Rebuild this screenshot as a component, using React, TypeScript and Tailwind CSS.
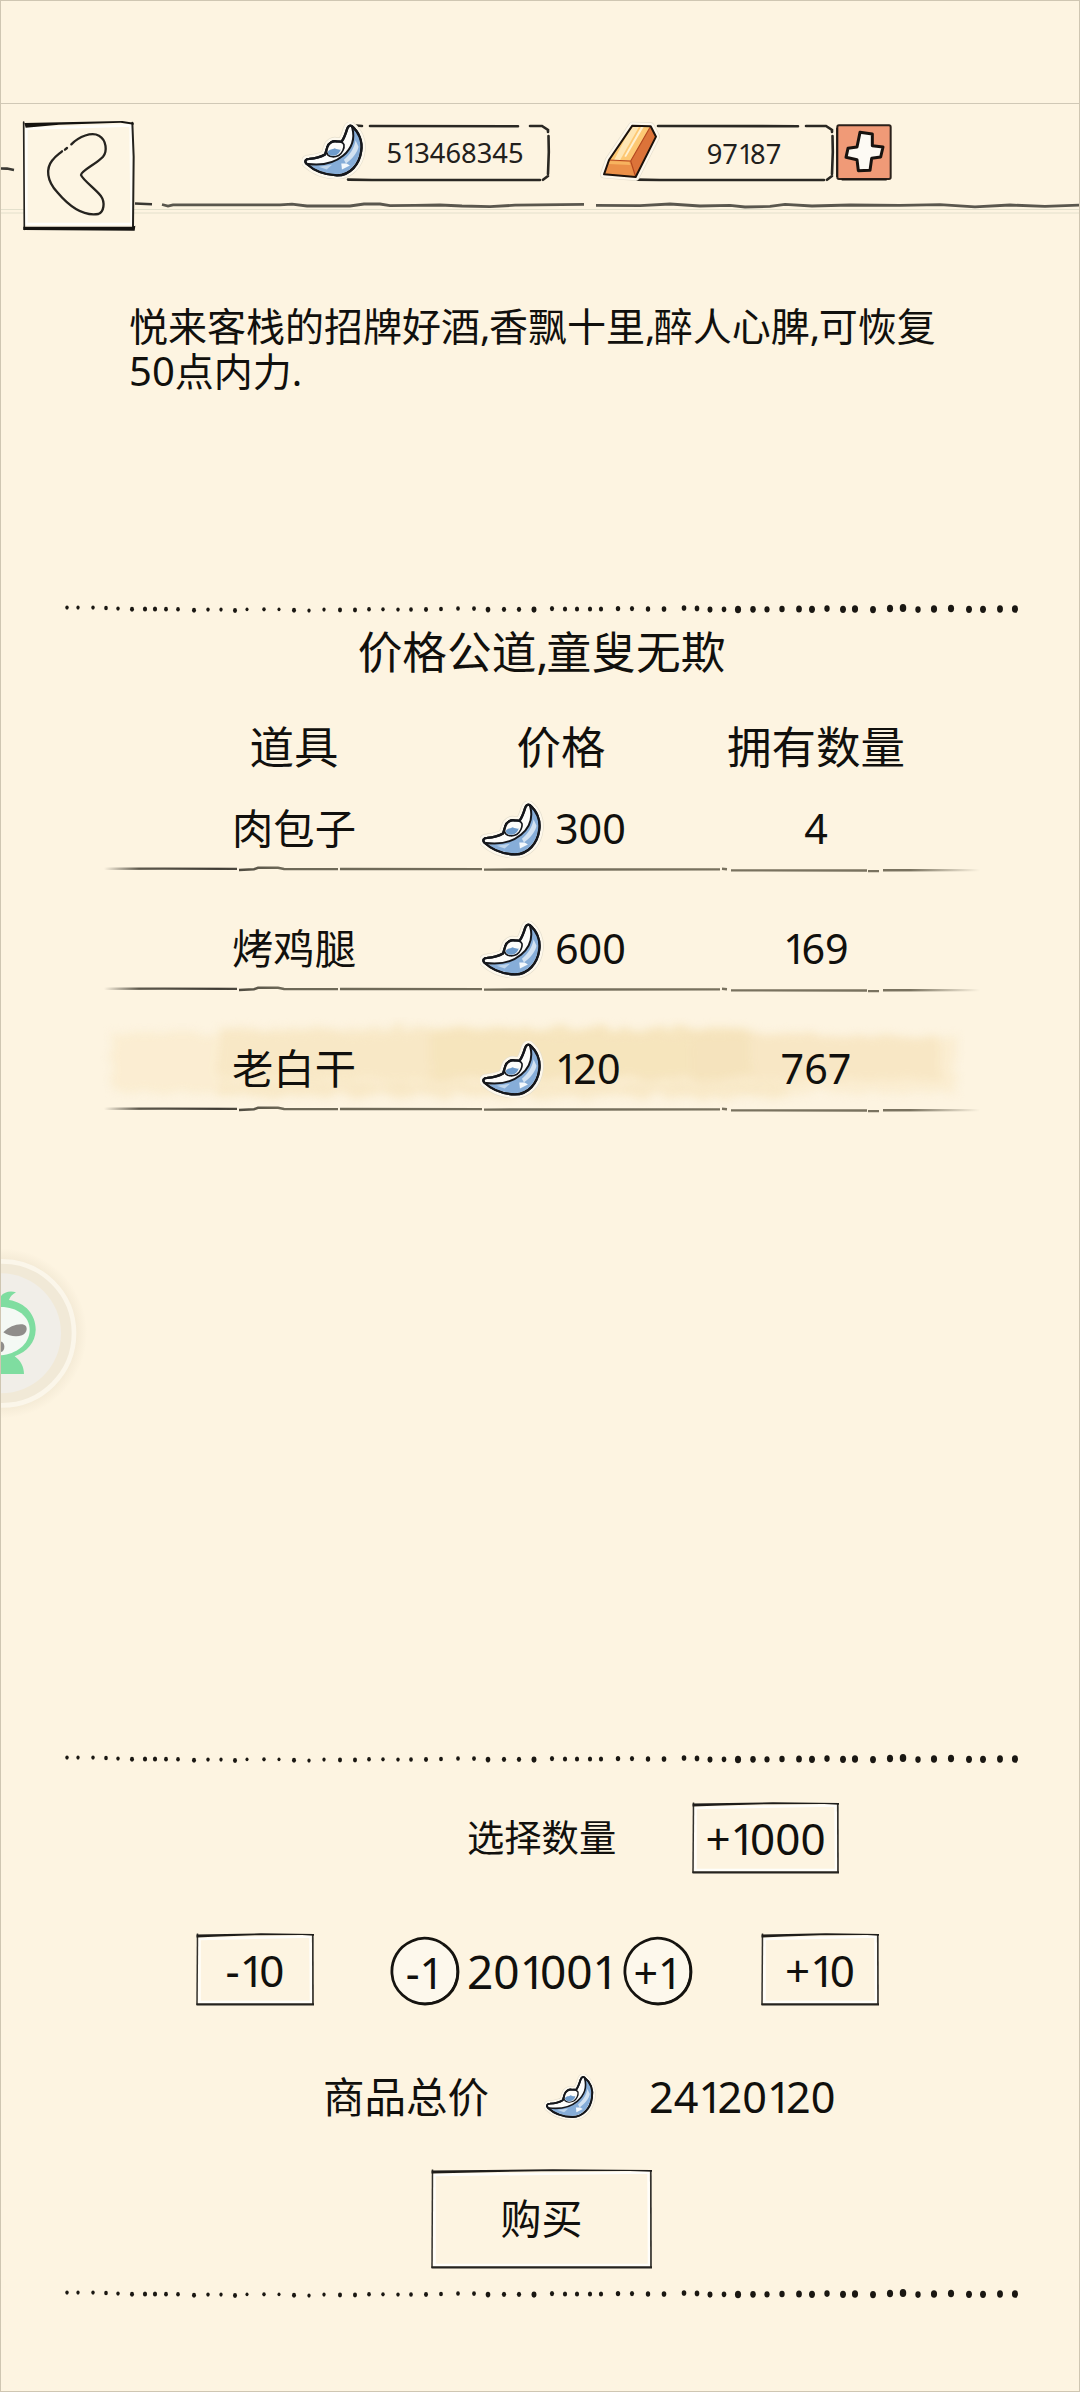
import { Fragment } from "react";
import type { ReactNode } from "react";
import clsx from "clsx";

type Item = {
  name: string;
  price: string;
  owned: string;
  selected?: boolean;
};

const items: Item[] = [
  { name: "肉包子", price: "300", owned: "4" },
  { name: "烤鸡腿", price: "600", owned: "169" },
  { name: "老白干", price: "120", owned: "767", selected: true },
];

// x, y, radius
const dots = [
  [67, 8, 1.6], [78, 8, 1.5], [93, 8, 1.6], [106, 8.5, 1.7], [118, 9, 1.6], [132, 9.7, 1.9], [145, 9.4, 2], [155, 9.4, 2],
  [166, 9.6, 1.8], [178, 9.7, 1.7], [194, 10.7, 1.9], [208, 10, 1.6], [221, 10, 1.5], [235, 11, 1.9], [247, 9.7, 1.4],
  [264, 9.7, 1.6], [279, 9.7, 1.4], [294, 10.7, 1.9], [309, 11, 1.5], [324, 10, 1.5], [340, 10.4, 1.9], [355, 10.4, 1.9],
  [369, 9.7, 1.7], [383, 9.7, 1.6], [398, 10, 1.6], [411, 10, 1.7], [426, 10, 1.9], [441, 9.4, 1.8], [458, 9, 1.7],
  [474, 9, 1.8], [488, 10, 2.2], [504, 9.7, 2], [519, 9.7, 2], [534, 10, 2.4], [552, 9, 2], [565, 9.4, 2], [577, 9.4, 2],
  [590, 9.4, 2], [601, 9.4, 2], [618, 9, 2.1], [632, 9, 2], [648, 9.4, 2.1], [664, 9.4, 2.2], [684, 8.4, 2.2],
  [697, 8.8, 2.2], [710, 10, 2.4], [724, 9.7, 2.2], [738, 10, 3], [753, 9.7, 2.7], [767, 9.7, 2.5], [782, 9.4, 2.6],
  [799, 9.4, 2.8], [812, 9.7, 2.9], [827, 9, 2.6], [843, 9.7, 2.9], [855, 9.4, 3], [873, 10, 2.9], [890, 9, 3],
  [903, 8.4, 3.2], [918, 10, 2.6], [934, 9.4, 3], [951, 9, 3], [969, 9.7, 2.9], [983, 9.7, 2.9], [1000, 9.4, 2.9],
  [1015, 9.4, 3],
];

function DottedLine({ className }: { className?: string }) {
  return (
    <svg className={clsx("block h-5 w-[1080px] shrink-0", className)} viewBox="0 0 1080 20" fill="#1a1712">
      {dots.map(([x, y, r]) => (
        <ellipse key={x} cx={x} cy={y + 0.6} rx={r * 0.95 + 0.2} ry={r * 1.15 + 0.3} />
      ))}
    </svg>
  );
}

// The digit "1" sits tighter against its right neighbour than the others
function Num({ value }: { value: string }) {
  const parts = value.split("1");
  return (
    <span className="whitespace-nowrap">
      {parts.map((p, i) => (
        <Fragment key={i}>
          {p}
          {i < parts.length - 1 && <span className="tracking-[-0.13em]">1</span>}
        </Fragment>
      ))}
    </span>
  );
}

function Comma() {
  return <span className="tracking-[-0.04em]">,</span>;
}

function Ingot({ className }: { className?: string }) {
  const body =
    "M179 37C200 54 213 82 208 113C203 152 175 186 135 186C98 185 66 172 43 151C36 143 41 136 51 136C70 135 86 131 99 123L106 101C110 88 123 80 135 84L149 84C157 74 162 58 166 45C169 37 174 34 179 37Z";
  return (
    <svg className={clsx("block shrink-0", className)} viewBox="30 25 192 172" strokeLinejoin="round" strokeLinecap="round">
      <path d={body} fill="none" stroke="#e6dfcd" strokeWidth="26" />
      <path d={body} fill="none" stroke="#fdf8ec" strokeWidth="22" />
      <path d={body} fill="#fdfdfb" stroke="#15171c" strokeWidth="7" />
      <path
        d="M181 42C203 60 210 88 204 116C197 152 170 182 135 182C105 182 76 172 52 156C90 156 128 148 153 127C178 106 190 76 181 42Z"
        fill="#86add8"
      />
      <path d="M191 80C188 104 172 126 156 139L162 150C180 138 197 118 200 100Z" fill="#d3e2f1" />
      <path d="M148 150L164 150L174 156L150 168Z" fill="#f3f8fc" />
      <path d="M80 160L120 154L104 168Z" fill="#c0d6ec" />
      <path
        d="M104 108C106 94 114 87 124 85C138 82 151 84 156 93C158 104 151 119 140 126C128 132 114 131 108 125C103 120 102 115 104 108Z"
        fill="#fdfdfb"
        stroke="#15171c"
        strokeWidth="5"
      />
      <path d="M107 115C113 106 121 109 128 104C137 108 143 109 146 108C144 118 136 126 124 127C114 128 107 123 107 115Z" fill="#6f9ccc" />
      <path d="M181 42C190 76 178 106 153 127C128 148 90 157 48 152" fill="none" stroke="#15171c" strokeWidth="6" />
      <path d={body} fill="none" stroke="#15171c" strokeWidth="7" />
    </svg>
  );
}

function GoldBar() {
  return (
    <svg className="block h-[60px] w-[60px] shrink-0" viewBox="58 58 180 180" strokeLinejoin="round">
      <path d="M155 72L210 74L226 105L165 226L70 218L85 175Z" fill="#fdf8ec" stroke="#e6dfcd" strokeWidth="24" />
      <path d="M155 72L210 74L226 105L165 226L70 218L85 175Z" fill="#fdf8ec" stroke="#fdf8ec" strokeWidth="20" />
      <path d="M155 72L210 74L150 178L85 175Z" fill="#fdc873" />
      <path d="M141 96L157 74L176 74L118 176L100 176Z" fill="#ffe6b3" />
      <path d="M181 76L189 76L136 166L131 164Z" fill="#fff0cf" />
      <path d="M210 74L226 105L165 226L150 178Z" fill="#dc7339" />
      <path d="M85 175L150 178L165 226L70 218Z" fill="#eb9048" />
      <path d="M88 178L146 180L149 190L84 187Z" fill="#f7b35f" />
      <path d="M85 175L150 178L210 74M150 178L165 226" fill="none" stroke="#b4471d" strokeWidth="3.5" />
      <path d="M155 72L210 74L226 105L165 226L70 218L85 175Z" fill="none" stroke="#1c120b" strokeWidth="6" />
    </svg>
  );
}

function AddButton() {
  return (
    <button className="block shrink-0">
      <svg className="block h-[58px] w-[58px]" viewBox="770 70 174 174" strokeLinejoin="round">
        <rect x="777" y="77" width="160" height="161" rx="5" fill="#f09a77" stroke="#2b211b" strokeWidth="6" />
        <path d="M776 84V232M790 240H925" stroke="#1d1713" strokeWidth="5" />
        <path
          d="M845 98L882 103V138L914 142L907 172L880 176L875 212L840 213L836 180L803 173L809 146L836 142Z"
          fill="#fdfaf4"
          stroke="#17120f"
          strokeWidth="9"
        />
      </svg>
    </button>
  );
}

function SketchBox({ w, h, className, children }: { w: number; h: number; className?: string; children: ReactNode }) {
  return (
    <button className={clsx("relative flex shrink-0 items-center justify-center", className)}>
      <svg className="absolute inset-0 h-full w-full" viewBox={`0 0 ${w} ${h}`}>
        <path d={`M3.5 6L${w - 3.5} 3.5L${w - 3} ${h - 4}H3.5Z`} fill="none" stroke="#fffefa" strokeWidth="2.5" />
        <path d={`M1.5 0.5L1 ${h - 1}`} stroke="#34322d" strokeWidth="1.5" />
        <path d={`M${w - 1.2} 2L${w - 1} ${h - 1}`} stroke="#34322d" strokeWidth="1.7" />
        <path d={`M0.5 1.6L${w * 0.55} 0.3L${w} 1L${w} 2.8L${w * 0.9} 2L${w * 0.5} 2.2L${w * 0.2} 3.5L0.5 4.4Z`} fill="#1f1d1a" />
        <path d={`M0.5 ${h - 2.8}H${w}V${h - 0.4}H0.5Z`} fill="#25231f" />
      </svg>
      <span className="relative">{children}</span>
    </button>
  );
}

function RoundButton({ children }: { children: ReactNode }) {
  return (
    <button className="relative flex h-[70px] w-[70px] shrink-0 items-center justify-center text-[43px]">
      <svg className="absolute inset-0" viewBox="0 0 70 70">
        <circle cx="35" cy="35" r="33" fill="#fdf8ec" />
        <path d="M53 8C45 2 32 0 22 5C8 11 1 24 2 38C3 54 18 68 35 68C54 68 68 54 68 36C68 24 62 14 53 8" fill="none" stroke="#15130f" strokeWidth="2.8" />
        <path d="M64 20C71 36 67 54 52 63C44 68 32 69 23 66" fill="none" stroke="#15130f" strokeWidth="1.8" />
      </svg>
      <span className="relative top-[2px]">{children}</span>
    </button>
  );
}

function RowLine() {
  return (
    <svg className="relative ml-[104px] block h-2 w-[876px]" viewBox="0 0 876 8" fill="none" strokeWidth="2.4">
      <defs>
        <linearGradient id="ink" gradientUnits="userSpaceOnUse" x1="0" y1="0" x2="876" y2="0">
          <stop offset="0" stopColor="#5d584c" stopOpacity="0" />
          <stop offset="0.04" stopColor="#5d584c" />
          <stop offset="0.13" stopColor="#3f3b34" />
          <stop offset="0.2" stopColor="#6d6857" />
          <stop offset="0.75" stopColor="#79725f" />
          <stop offset="0.92" stopColor="#79725f" />
          <stop offset="1" stopColor="#827b69" stopOpacity="0" />
        </linearGradient>
      </defs>
      <g stroke="url(#ink)">
        <path d="M0 3.8L60 3.6L133 3.9" />
        <path d="M135 5L150 4.2L154 2.8H174L180 4L234 4.1" />
        <path d="M236 4L378 4.1M380 4.6L470 4.5L616 4.4" />
        <path d="M618 3.8L623 4.2M627 5.4L763 5.5M764 6.1H775M779 5.2L876 5.1" />
      </g>
    </svg>
  );
}

function Brush() {
  return (
    <svg className="absolute left-[90px] top-0 h-[110px] w-[900px]" viewBox="0 0 900 110">
      <defs>
        <filter id="rough" x="-5%" y="-30%" width="110%" height="160%" colorInterpolationFilters="sRGB">
          <feTurbulence type="fractalNoise" baseFrequency="0.05 0.09" numOctaves="2" seed="4" />
          <feDisplacementMap in="SourceGraphic" scale="14" xChannelSelector="R" yChannelSelector="G" />
          <feGaussianBlur stdDeviation="4" />
        </filter>
      </defs>
      <g filter="url(#rough)">
        <path d="M22 16H640L866 20V76H22Z" fill="#f9ebcc" opacity="0.75" />
        <path d="M130 11H660V62H130Z" fill="#f5e3bc" opacity="0.55" />
        <path d="M340 11H660V60H340Z" fill="#f3deb0" opacity="0.4" />
        <path d="M600 18H850V62H600Z" fill="#f5e3bc" opacity="0.6" />
        <path d="M130 66H700V80H130Z" fill="#f8e6c2" opacity="0.65" />
      </g>
    </svg>
  );
}

function ItemRow({ item }: { item: Item }) {
  return (
    <div className="relative h-[120px] pt-4">
      {item.selected && <Brush />}
      <div className="relative grid h-[72px] grid-cols-[266px_268px_242px] items-center pl-[161px] text-[41.3px]">
        <div className="text-center">{item.name}</div>
        <div className="flex items-center pl-[53px]">
          <Ingot className="h-[57px] w-16" />
          <span className="pl-[11px]">
            <Num value={item.price} />
          </span>
        </div>
        <div className="text-center">
          <Num value={item.owned} />
        </div>
      </div>
      <RowLine />
    </div>
  );
}

function FloatingPet() {
  return (
    <svg className="absolute -left-px top-[1239px] h-[190px] w-[95px]" viewBox="0 0 285 570">
      <defs>
        <radialGradient id="halo" gradientUnits="userSpaceOnUse" cx="6" cy="280" r="255">
          <stop offset="0.84" stopColor="#f3e9d4" />
          <stop offset="1" stopColor="#f3e9d4" stopOpacity="0" />
        </radialGradient>
      </defs>
      <circle cx="6" cy="280" r="255" fill="url(#halo)" />
      <circle cx="6" cy="280" r="216" fill="#f1e9d7" stroke="#fbf6ea" strokeWidth="14" />
      <circle cx="3" cy="280" r="180" fill="#f1eee8" />
      <path d="M0 172C8 158 28 150 48 157C36 164 30 170 27 180C78 188 108 226 107 270C106 308 82 334 44 349C62 362 72 380 72 402H0Z" fill="#7fdda0" />
      <path d="M0 201C50 200 90 228 89 272C87 315 46 343 0 346Z" fill="#f4f9f4" />
      <path d="M10 277C28 258 54 250 72 254C84 258 83 278 66 286C48 292 26 288 10 277Z" fill="#8f8d8a" />
      <path d="M0 304C9 304 13 312 13 320C13 330 8 336 0 336Z" fill="#8f8d8a" />
      <path d="M1 0V570" stroke="#c9bfab" strokeWidth="3" />
    </svg>
  );
}

function Header() {
  return (
    <header className="relative flex h-[240px] shrink-0 items-start">
      <svg className="absolute inset-0 h-[240px] w-[1080px]" viewBox="0 0 1080 240" fill="none">
        <path d="M0 103.5H1080" stroke="#d0c8b6" />
        <path d="M0 209.5H1080M0 213H1080" stroke="#e3e0cc" />
        <path d="M0 168.5L7 168.6L14 170" stroke="#3a3833" strokeWidth="2.6" />
        <path d="M135 203.5L152 204.2" stroke="#3a3833" strokeWidth="2.6" />
        <path
          d="M162 204.5L168 206L173 204.8L280 204.8L292 204.2L307 206L350 206L364 204L380 204L390 205.6L415 205.4L440 205L462 206L490 206.6L515 205.2L584 204.4"
          stroke="#5a574e"
          strokeWidth="2.8"
        />
        <path
          d="M596 205.4L640 205.6L670 204L700 206L730 205.4L745 207L770 206.4L785 204.4L812 206L850 205L900 205.4L940 204.6L975 206.8L1010 205L1045 206.4L1080 205"
          stroke="#5a574e"
          strokeWidth="2.8"
        />
      </svg>

      <button className="relative ml-[21px] mt-[119px]">
        <svg className="block h-[112px] w-[116px]" viewBox="66 87 348 336" fill="none" stroke="#25231f" strokeLinecap="round">
          <path d="M74 100L402 97V412H76Z" fill="#fdf5e3" stroke="none" />
          <path d="M82 116L395 106L398 402H82Z" stroke="#fffefa" strokeWidth="8" />
          <path d="M74 96L76 418" strokeWidth="5" />
          <path d="M400 98L404 200L402 412" strokeWidth="6" />
          <path d="M76 99L370 93L404 98V104L365 98L180 104L80 113Z" fill="#151310" stroke="none" />
          <path d="M73 410H400L409 407L407 422L73 420Z" fill="#151310" stroke="none" />
          <path
            d="M217 163C240 139 278 125 300 137C323 150 325 185 312 200C292 222 246 242 246 255C250 268 292 300 305 317C320 338 314 366 298 372C252 380 207 345 175 307C143 272 140 236 160 211C168 199 180 192 189 184"
            strokeWidth="7"
          />
          <path d="M198 179L204 174" strokeWidth="7" />
        </svg>
      </button>

      <div className="relative ml-[165px] mt-[122px] flex items-center">
        <svg className="absolute left-10 top-0 h-[62px] w-[210px]" viewBox="0 0 210 62" fill="none" stroke="#2a2823" strokeWidth="2.6" strokeLinecap="round">
          <path d="M14 3.5L20 4M28 4L176 4.2M188 4H200L206 8V10M206.5 14L206.8 30L206 52M206 54L201 57.8M6 57.6L30 58L198 58" />
        </svg>
        <Ingot className="relative h-[57px] w-16" />
        <div className="w-[178px] pt-[6px] text-center text-[27.3px] text-[#22201c]">
          <Num value="513468345" />
        </div>
      </div>

      <div className="relative ml-[56px] mt-[122px] flex items-start">
        <svg className="absolute left-[30px] top-0 h-[62px] w-[210px]" viewBox="0 0 210 62" fill="none" stroke="#2a2823" strokeWidth="2.6" strokeLinecap="round">
          <path d="M28 4L168 4.2M176 4H196L202 8V10M202.5 14L202.8 30L202 52M202 54L197 57.8M6 57.6L30 58L194 58" />
        </svg>
        <div className="relative -mt-px">
          <GoldBar />
        </div>
        <div className="w-[174px] pr-[6px] pt-[12px] text-center text-[27.3px] text-[#22201c]">
          <Num value="97187" />
        </div>
        <div className="relative left-px top-px">
          <AddButton />
        </div>
      </div>
    </header>
  );
}

export default function App() {
  return (
    <main
      lang="zh-CN"
      className="relative flex h-[2392px] w-[1080px] flex-col overflow-hidden border border-[#cfc6b2] bg-[#fdf4e1] font-['Noto_Sans','Noto_Sans_CJK_SC',sans-serif] text-[#11100d]"
    >
      <div className="-m-px flex h-[2392px] flex-col">
        <Header />

        <p className="ml-[129px] mt-[63px] h-[90px] shrink-0 whitespace-nowrap text-[39px] leading-[45px]">
          悦来客栈的招牌好酒
          <Comma />
          香飘十里
          <Comma />
          醉人心脾
          <Comma />
          可恢复
          <br />
          <span className="text-[40px] leading-[45px]">50</span>点内力.
        </p>

        <DottedLine className="mt-[206px]" />

        <h1 className="mt-[3px] h-[60px] pl-[3px] text-center text-[44.7px] leading-[60px]">
          价格公道
          <Comma />
          童叟无欺
        </h1>

        <div className="mt-[35px] grid h-[60px] grid-cols-[266px_268px_242px] pl-[161px] text-center text-[44.5px] leading-[60px]">
          <div>道具</div>
          <div>价格</div>
          <div>拥有数量</div>
        </div>
        {items.map((item) => (
          <ItemRow key={item.name} item={item} />
        ))}

        <DottedLine className="mt-[612px]" />

        <div className="mt-[33px] flex h-[72px] items-center pl-[467px]">
          <span className="w-[225px] text-[37.3px]">选择数量</span>
          <SketchBox w={147} h={72} className="h-[72px] w-[147px] text-[44px]">
            <Num value="+1000" />
          </SketchBox>
        </div>

        <div className="mt-[59px] flex h-[73px] items-center pl-[196px]">
          <SketchBox w={118} h={73} className="h-[73px] w-[118px] text-[44px]">
            <Num value="-10" />
          </SketchBox>
          <div className="ml-[76px] flex items-center pt-[3px]">
            <RoundButton>-1</RoundButton>
            <span className="w-[163px] pl-[7px] text-[46px]">
              <Num value="201001" />
            </span>
            <RoundButton>+1</RoundButton>
          </div>
          <SketchBox w={118} h={73} className="ml-[68px] h-[73px] w-[118px] text-[44px]">
            <Num value="+10" />
          </SketchBox>
        </div>

        <div className="mt-[56px] flex h-[70px] items-center pl-[323px]">
          <span className="w-[221px] text-[41.5px]">商品总价</span>
          <Ingot className="h-[46px] w-[52px]" />
          <span className="pl-[53px] text-[43.2px]">
            <Num value="24120120" />
          </span>
        </div>

        <SketchBox w={221} h={100} className="ml-[431px] mt-[37px] h-[100px] w-[221px] text-[41px]">
          购买
        </SketchBox>

        <DottedLine className="mt-[15px]" />
      </div>

      <FloatingPet />
    </main>
  );
}
